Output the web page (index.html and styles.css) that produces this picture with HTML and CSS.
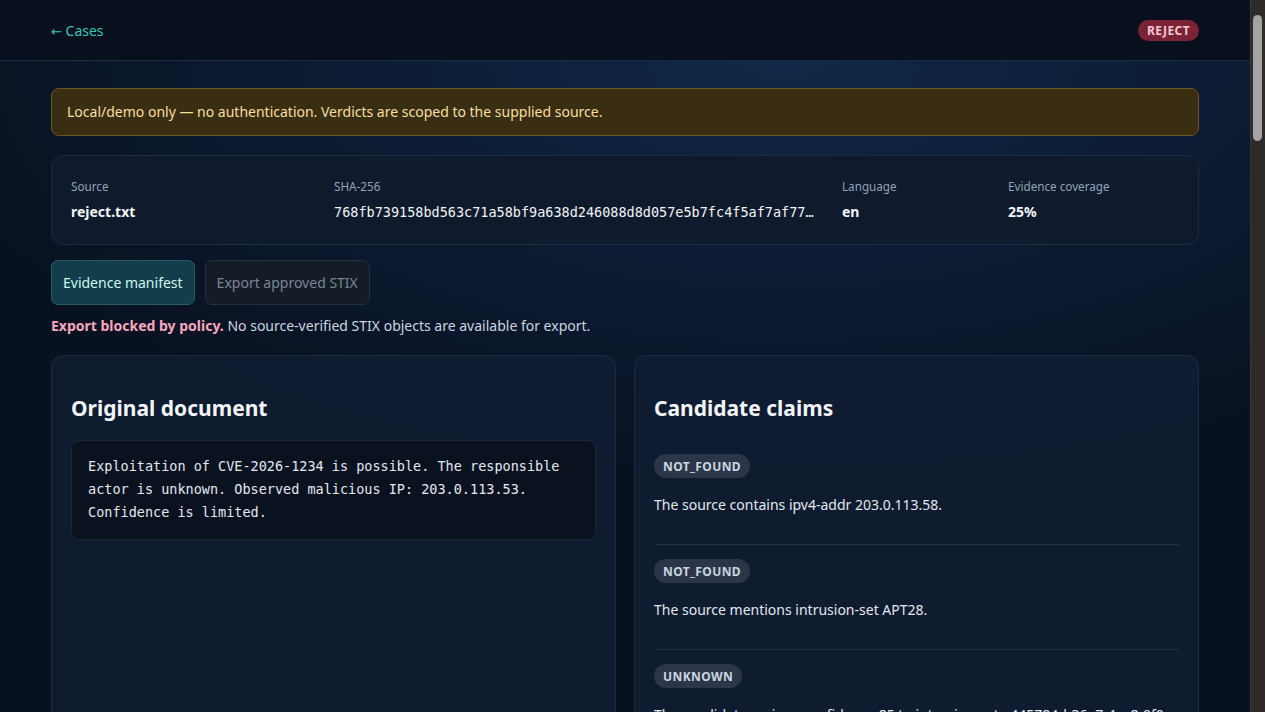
FILE: index.html
```html
<!DOCTYPE html>
<html lang="en">
<head>
  <meta charset="UTF-8">
  <meta name="viewport" content="width=device-width, initial-scale=1.0">
  <title>Case reject.txt</title>
  <link rel="stylesheet" href="styles.css">
</head>
<body>
  <header class="topbar">
    <div class="topbar-inner">
      <a class="back-link" href="#"><span class="arrow">←</span> Cases</a>
      <span class="verdict verdict-reject">REJECT</span>
    </div>
  </header>

  <main class="page">
    <div class="notice">Local/demo only — no authentication. Verdicts are scoped to the supplied source.</div>

    <section class="meta-card">
      <div class="meta-item">
        <div class="meta-label">Source</div>
        <div class="meta-value">reject.txt</div>
      </div>
      <div class="meta-item">
        <div class="meta-label">SHA-256</div>
        <div class="meta-value mono hash">768fb739158bd563c71a58bf9a638d246088d8d057e5b7fc4f5af7af77c1e2d4</div>
      </div>
      <div class="meta-item">
        <div class="meta-label">Language</div>
        <div class="meta-value">en</div>
      </div>
      <div class="meta-item">
        <div class="meta-label">Evidence coverage</div>
        <div class="meta-value">25%</div>
      </div>
    </section>

    <div class="actions">
      <button class="btn btn-primary">Evidence manifest</button>
      <button class="btn btn-disabled" disabled>Export approved STIX</button>
    </div>
    <p class="policy-note"><b>Export blocked by policy.</b> No source-verified STIX objects are available for export.</p>

    <div class="columns">
      <section class="panel">
        <h2>Original document</h2>
        <pre class="doc">Exploitation of CVE-2026-1234 is possible. The responsible
actor is unknown. Observed malicious IP: 203.0.113.53.
Confidence is limited.</pre>
      </section>

      <section class="panel">
        <h2>Candidate claims</h2>
        <div class="claim">
          <span class="status">NOT_FOUND</span>
          <p>The source contains ipv4-addr 203.0.113.58.</p>
        </div>
        <div class="claim">
          <span class="status">NOT_FOUND</span>
          <p>The source mentions intrusion-set APT28.</p>
        </div>
        <div class="claim">
          <span class="status">UNKNOWN</span>
          <p>The candidate assigns confidence 85 to intrusion-set a445784d-36a7-4ac8-9f0e-7b21c3d55e10.</p>
        </div>
        <div class="claim">
          <span class="status">SUPPORTED</span>
          <p>The source mentions vulnerability CVE-2026-1234.</p>
        </div>
        <div class="claim">
          <span class="status">NOT_FOUND</span>
          <p>The source attributes the activity to a known threat actor.</p>
        </div>
        <div class="claim">
          <span class="status">UNKNOWN</span>
          <p>The candidate marks indicator 203.0.113.53 as high confidence.</p>
        </div>
      </section>
    </div>

    <section class="panel manifest">
      <h2>Evidence manifest</h2>
      <div class="manifest-row"><span class="mono">claim-001</span><span>no matching span in source</span></div>
      <div class="manifest-row"><span class="mono">claim-002</span><span>no matching span in source</span></div>
      <div class="manifest-row"><span class="mono">claim-003</span><span>confidence not stated in source</span></div>
      <div class="manifest-row"><span class="mono">claim-004</span><span>span 16–29 "CVE-2026-1234"</span></div>
      <div class="manifest-row"><span class="mono">claim-005</span><span>source says actor is unknown</span></div>
      <div class="manifest-row"><span class="mono">claim-006</span><span>source says confidence is limited</span></div>
    </section>
  </main>
</body>
</html>
```

FILE: styles.css
```css
html {
  color-scheme: dark;
}

body {
  margin: 0;
  padding-right: 15px;
  font-family: "Noto Sans", "Open Sans", sans-serif;
  font-size: 14px;
  color: #e2e8f0;
  background-color: #0a1424;
  background-image: radial-gradient(ellipse 70% 60% at 62% 8%, #112848 0%, #0c1a31 55%, #081120 100%);
  background-attachment: fixed;
  min-height: 100vh;
}

/* stand-in for the window scrollbar the screenshot shows */
body::before {
  content: "";
  position: fixed;
  top: 0;
  right: 0;
  width: 15px;
  height: 100%;
  background-color: #2d2a27;
  border-left: 1px solid #3a3633;
  box-sizing: border-box;
}

body::after {
  content: "";
  position: fixed;
  top: 15px;
  right: 3px;
  width: 9px;
  height: 126px;
  border-radius: 5px;
  background-color: #a3a3a3;
}

.mono {
  font-family: "DejaVu Sans Mono", "Liberation Mono", monospace;
}

/* top bar */
.topbar {
  height: 60px;
  background-color: #08101d;
  border-bottom: 1px solid #1a2a42;
}

.topbar-inner {
  max-width: 1148px;
  height: 100%;
  margin: 0 auto;
  display: flex;
  align-items: center;
  justify-content: space-between;
}

.back-link {
  color: #3cc6b4;
  text-decoration: none;
  font-size: 14px;
}

.back-link .arrow {
  font-family: "DejaVu Sans", sans-serif;
  font-size: 13px;
}

.verdict {
  display: inline-block;
  padding: 2px 9px;
  border-radius: 999px;
  font-size: 12px;
  font-weight: 700;
  letter-spacing: 0.4px;
}

.verdict-reject {
  background-color: #7a2336;
  color: #fbc7d4;
}

/* page */
.page {
  max-width: 1148px;
  margin: 0 auto;
  padding: 27px 0 40px;
}

.notice {
  padding: 12px 15px;
  background-color: #3a2e12;
  border: 1px solid #6a5620;
  border-radius: 8px;
  color: #f7dfa0;
  font-size: 14px;
  line-height: 22px;
}

.meta-card {
  margin-top: 19px;
  padding: 20px 19px 22px;
  display: grid;
  grid-template-columns: 247px 492px 150px 1fr;
  gap: 16px;
  background-color: #0f1a2c;
  border: 1px solid #1d2b40;
  border-radius: 12px;
}

.meta-item {
  min-width: 0;
}

.meta-label {
  font-size: 11.7px;
  color: #94a3b8;
  line-height: 20px;
}

.meta-value {
  margin-top: 6px;
  font-size: 14px;
  font-weight: 700;
  color: #f1f5f9;
  line-height: 20px;
}

.hash {
  max-width: 484px;
  font-weight: 400;
  font-size: 13.5px;
  white-space: nowrap;
  overflow: hidden;
  text-overflow: ellipsis;
}

.actions {
  margin-top: 15px;
  display: flex;
  gap: 10px;
}

.btn {
  height: 45px;
  padding: 0 11px;
  border-radius: 7px;
  font-family: inherit;
  font-size: 14px;
}

.btn-primary {
  background-color: #133d4a;
  border: 1px solid #245e68;
  color: #cdf6f0;
}

.btn-disabled {
  background-color: #141c28;
  border: 1px solid #243040;
  color: #7b8593;
}

.policy-note {
  margin: 11px 0 19px;
  color: #cbd5e1;
  font-size: 14px;
  line-height: 20px;
}

.policy-note b {
  color: #f9a8bf;
}

/* panels */
.columns {
  display: grid;
  grid-template-columns: 1fr 1fr;
  gap: 18px;
}

.panel {
  padding: 36px 19px 20px;
  background-color: rgba(19, 32, 54, 0.7);
  border: 1px solid #1d2b41;
  border-radius: 12px;
  align-self: start;
}

.columns .panel:first-child {
  align-self: stretch;
}

.panel h2 {
  margin: 0 0 16px;
  font-size: 21px;
  line-height: 32px;
  color: #f1f5f9;
}

.doc {
  margin: 0;
  padding: 14px 16px 15px;
  background-color: #0a1220;
  border: 1px solid #1a2638;
  border-radius: 8px;
  font-family: "DejaVu Sans Mono", "Liberation Mono", monospace;
  font-size: 13.5px;
  line-height: 23px;
  color: #e2e8f0;
  white-space: pre-wrap;
}

.claim {
  padding: 14px 0 28px;
  border-bottom: 1px solid #223047;
}

.status {
  display: inline-block;
  padding: 0 9px;
  height: 24px;
  line-height: 25px;
  border-radius: 999px;
  background-color: #2b3749;
  color: #cbd5e1;
  font-size: 12px;
  font-weight: 700;
  letter-spacing: 0.4px;
}

.claim p {
  margin: 16px 0 0;
  line-height: 22px;
  font-size: 14px;
  color: #e2e8f0;
}

.manifest {
  margin-top: 18px;
  padding-bottom: 600px;
}

.manifest-row {
  display: flex;
  gap: 24px;
  padding: 10px 0;
  border-bottom: 1px solid #223047;
  color: #cbd5e1;
}
```
